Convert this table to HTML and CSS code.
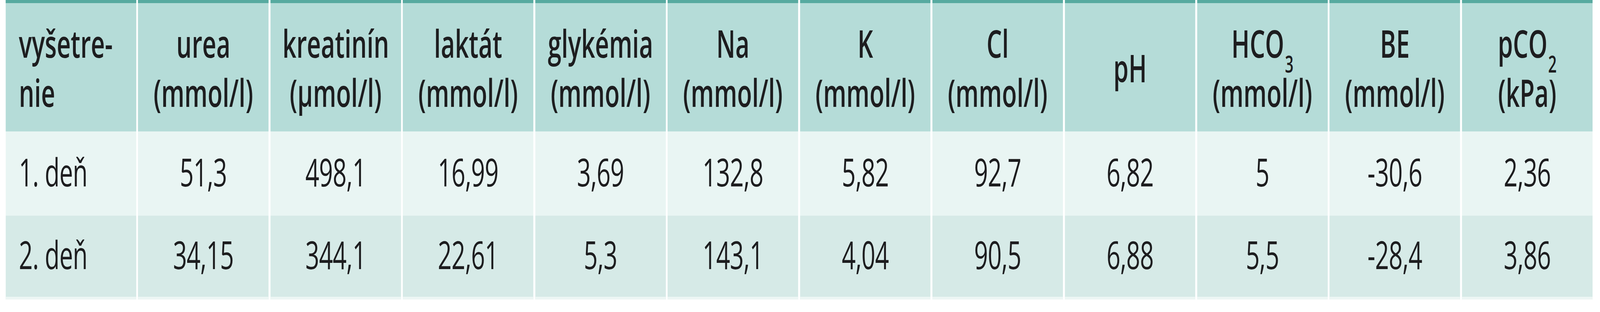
FILE: index.html
```html
<!DOCTYPE html>
<html lang="sk">
<head>
<meta charset="utf-8">
<title>Tabuľka</title>
<link rel="stylesheet" href="styles.css">
</head>
<body>
<div class="frame">
  <div class="stage">
    <div class="tbl">
      <div class="cell head first"><span class="in">vyšetre-<br>nie</span></div>
      <div class="cell head"><span class="in">urea<br>(mmol/l)</span></div>
      <div class="cell head"><span class="in">kreatinín<br>(µmol/l)</span></div>
      <div class="cell head"><span class="in">laktát<br>(mmol/l)</span></div>
      <div class="cell head"><span class="in">glykémia<br>(mmol/l)</span></div>
      <div class="cell head"><span class="in">Na<br>(mmol/l)</span></div>
      <div class="cell head"><span class="in">K<br>(mmol/l)</span></div>
      <div class="cell head"><span class="in">Cl<br>(mmol/l)</span></div>
      <div class="cell head"><span class="in">pH</span></div>
      <div class="cell head"><span class="in">HCO<sub class="sub">3</sub><br>(mmol/l)</span></div>
      <div class="cell head"><span class="in">BE<br>(mmol/l)</span></div>
      <div class="cell head"><span class="in">pCO<sub class="sub">2</sub><br>(kPa)</span></div>

      <div class="cell data r1 first"><span class="in">1. deň</span></div>
      <div class="cell data r1"><span class="in">51,3</span></div>
      <div class="cell data r1"><span class="in">498,1</span></div>
      <div class="cell data r1"><span class="in">16,99</span></div>
      <div class="cell data r1"><span class="in">3,69</span></div>
      <div class="cell data r1"><span class="in">132,8</span></div>
      <div class="cell data r1"><span class="in">5,82</span></div>
      <div class="cell data r1"><span class="in">92,7</span></div>
      <div class="cell data r1"><span class="in">6,82</span></div>
      <div class="cell data r1"><span class="in">5</span></div>
      <div class="cell data r1"><span class="in">-30,6</span></div>
      <div class="cell data r1"><span class="in">2,36</span></div>

      <div class="cell data r2 first"><span class="in">2. deň</span></div>
      <div class="cell data r2"><span class="in">34,15</span></div>
      <div class="cell data r2"><span class="in">344,1</span></div>
      <div class="cell data r2"><span class="in">22,61</span></div>
      <div class="cell data r2"><span class="in">5,3</span></div>
      <div class="cell data r2"><span class="in">143,1</span></div>
      <div class="cell data r2"><span class="in">4,04</span></div>
      <div class="cell data r2"><span class="in">90,5</span></div>
      <div class="cell data r2"><span class="in">6,88</span></div>
      <div class="cell data r2"><span class="in">5,5</span></div>
      <div class="cell data r2"><span class="in">-28,4</span></div>
      <div class="cell data r2"><span class="in">3,86</span></div>
    </div>
  </div>
</div>
<script src="app.js"></script>
</body>
</html>
```
FILE: styles.css
```css
* {
  box-sizing: border-box;
}

:root {
  /* horizontal fit of the 6447px-wide design into the actual window */
  --sx: 0.63533;
}

html, body {
  margin: 0;
  padding: 0;
  background: #ffffff;
  overflow: hidden;
}

.frame {
  width: 100%;
  height: 800px;
  overflow: hidden;
}

.stage {
  width: 6447px;
  transform-origin: 0 0;
  transform: scaleX(var(--sx));
}

.tbl {
  display: grid;
  grid-template-columns: repeat(12, 525.8px);
  grid-template-rows: 337px 216px 215px;
  column-gap: 7.65px;
  margin-left: 23px;
  font-family: "Open Sans", "Noto Sans", "DejaVu Sans", sans-serif;
  color: #1d1d1f;
}

.cell {
  display: flex;
  align-items: center;
  justify-content: center;
  text-align: center;
  font-size: 98px;
  line-height: 126px;
  white-space: nowrap;
}

.in {
  display: block;
}

.head {
  background: #b5dcd8;
  border-top: 8px solid #57aaa0;
  font-weight: 600;
}

.data {
  font-weight: 400;
  padding-bottom: 10px;
  letter-spacing: -1px;
}

.r1 {
  background: #e9f5f3;
}

.r2 {
  background: #d6eae7;
  border-bottom: 7px solid #edf6f4;
}

.first {
  justify-content: flex-start;
  text-align: left;
  padding-left: 53px;
}

.sub {
  font-size: 60px;
  line-height: 0;
  vertical-align: -38px;
  margin-left: 3px;
}
```
FILE: app.js
```js
(function () {
  var design = 6447;
  var w = document.documentElement.clientWidth || window.innerWidth;
  var sx = Math.min(1, w / design);
  document.documentElement.style.setProperty('--sx', String(sx));
})();
```
